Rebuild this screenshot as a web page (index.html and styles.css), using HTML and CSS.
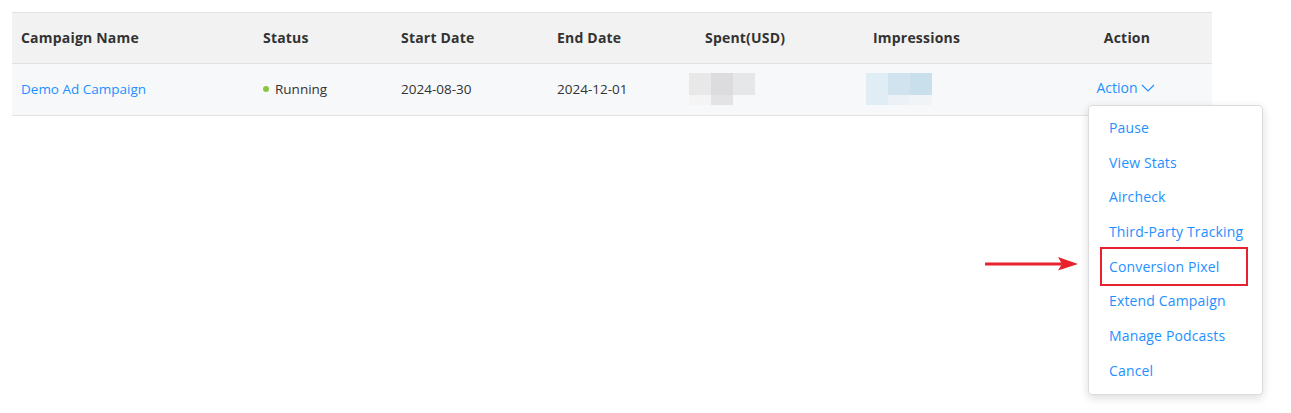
FILE: index.html
```html
<!DOCTYPE html>
<html>
<head>
<meta charset="utf-8">
<link rel="stylesheet" href="styles.css">
</head>
<body>
<div class="page">
  <table class="grid">
    <colgroup>
      <col class="c1"><col class="c2"><col class="c3"><col class="c4"><col class="c5"><col class="c6"><col class="c7">
    </colgroup>
    <thead>
      <tr>
        <th>Campaign Name</th>
        <th>Status</th>
        <th>Start Date</th>
        <th>End Date</th>
        <th>Spent(USD)</th>
        <th>Impressions</th>
        <th class="center">Action</th>
      </tr>
    </thead>
    <tbody>
      <tr>
        <td><a class="link">Demo Ad Campaign</a></td>
        <td><span class="dot"></span>Running</td>
        <td>2024-08-30</td>
        <td>2024-12-01</td>
        <td>
          <div class="mosaic gray">
            <div class="mcol"><span class="t a"></span><span class="b a2"></span></div>
            <div class="mcol"><span class="t bb"></span><span class="b bb2"></span></div>
            <div class="mcol"><span class="t cc"></span><span class="b"></span></div>
          </div>
        </td>
        <td>
          <div class="mosaic blue">
            <div class="mcol"><span class="t a"></span><span class="b a2"></span></div>
            <div class="mcol"><span class="t bb"></span><span class="b bb2"></span></div>
            <div class="mcol"><span class="t cc"></span><span class="b cc2"></span></div>
          </div>
        </td>
        <td class="center">
          <a class="link action">Action<svg class="chev" width="14" height="8" viewBox="0 0 14 8"><polyline points="1,1 7,7 13,1" fill="none" stroke="#1e90ff" stroke-width="1.1"/></svg></a>
        </td>
      </tr>
    </tbody>
  </table>
  <ul class="menu">
    <li>Pause</li>
    <li>View Stats</li>
    <li>Aircheck</li>
    <li>Third-Party Tracking</li>
    <li class="marked">Conversion Pixel</li>
    <li>Extend Campaign</li>
    <li>Manage Podcasts</li>
    <li>Cancel</li>
  </ul>
  <svg class="arrow" width="94" height="14" viewBox="0 0 94 14">
    <line x1="1" y1="7" x2="76" y2="7" stroke="#e8222c" stroke-width="3" stroke-linecap="round"/>
    <polygon points="73,0 93,7 73,13.5 77,7" fill="#e8222c"/>
  </svg>
</div>
</body>
</html>
```
FILE: styles.css
```css
html, body {
  margin: 0;
  padding: 0;
  background: #ffffff;
}
body {
  font-family: "Open Sans", "Liberation Sans", sans-serif;
  font-size: 14px;
  color: #333333;
}
.page {
  position: relative;
  padding: 12px 0 0 12px;
  height: 401px;
}
.grid {
  border-collapse: collapse;
  width: 1200px;
  table-layout: fixed;
}
.c1 { width: 242px; }
.c2 { width: 138px; }
.c3 { width: 156px; }
.c4 { width: 148px; }
.c5 { width: 168px; }
.c6 { width: 178px; }
.c7 { width: 170px; }
.grid th {
  background: #f2f2f2;
  border-top: 1px solid #e2e2e2;
  border-bottom: 1px solid #e2e2e2;
  height: 48px;
  padding: 0 0 2px 9px;
  text-align: left;
  font-weight: 700;
  letter-spacing: 0.2px;
  color: #333333;
  vertical-align: middle;
}
.grid td {
  background: #f7f8fa;
  border-bottom: 1px solid #e2e2e2;
  height: 49px;
  padding: 0 0 2px 9px;
  vertical-align: middle;
  color: #333333;
  font-size: 13.5px;
}
.grid th.center, .grid td.center {
  text-align: center;
  padding: 0 0 2px 0;
}
.link {
  color: #1e90ff;
  text-decoration: none;
}
.dot {
  display: inline-block;
  width: 6px;
  height: 6px;
  border-radius: 50%;
  background: #8cc63f;
  margin: 0 6px 2px 0;
  vertical-align: middle;
}
.mosaic {
  display: flex;
  margin-left: -16px;
  margin-top: 0;
}
.mosaic.blue { margin-left: -7px; }
.mcol {
  display: flex;
  flex-direction: column;
  width: 22px;
}
.mcol .t { height: 22px; display: block; }
.mcol .b { height: 10px; display: block; }
.gray .a { background: #e8e8e9; }
.gray .a2 { background: #f4f4f5; }
.gray .bb { background: #dcdcde; }
.gray .bb2 { background: #e3e3e5; }
.gray .cc { background: #e6e7e8; }
.blue .a { background: #e1edf4; }
.blue .a2 { background: #e1edf4; }
.blue .bb { background: #d0e3ee; }
.blue .bb2 { background: #ebf1f6; }
.blue .cc { background: #c9dfec; }
.blue .cc2 { background: #f1f4f7; }
.action {
  display: inline-flex;
  align-items: center;
  gap: 3px;
  margin-left: -3px;
  position: relative;
  top: -1px;
  font-size: 14px;
}
.chev { margin-top: 1px; }
.menu {
  position: absolute;
  left: 1088px;
  top: 105px;
  width: 173px;
  margin: 0;
  padding: 5px 0;
  list-style: none;
  background: #ffffff;
  border: 1px solid #dcdcdc;
  border-radius: 4px;
  box-shadow: 0 3px 10px rgba(0, 0, 0, 0.14);
  z-index: 5;
}
.menu li {
  position: relative;
  height: 34.7px;
  line-height: 34.7px;
  padding: 0 0 0 20px;
  color: #1e90ff;
  white-space: nowrap;
  letter-spacing: 0.15px;
}
.menu li.marked::after {
  content: "";
  position: absolute;
  left: 11px;
  right: 14px;
  top: -3px;
  bottom: -2px;
  border: 2px solid #e5222d;
}
.arrow {
  position: absolute;
  left: 985px;
  top: 257px;
}
```
